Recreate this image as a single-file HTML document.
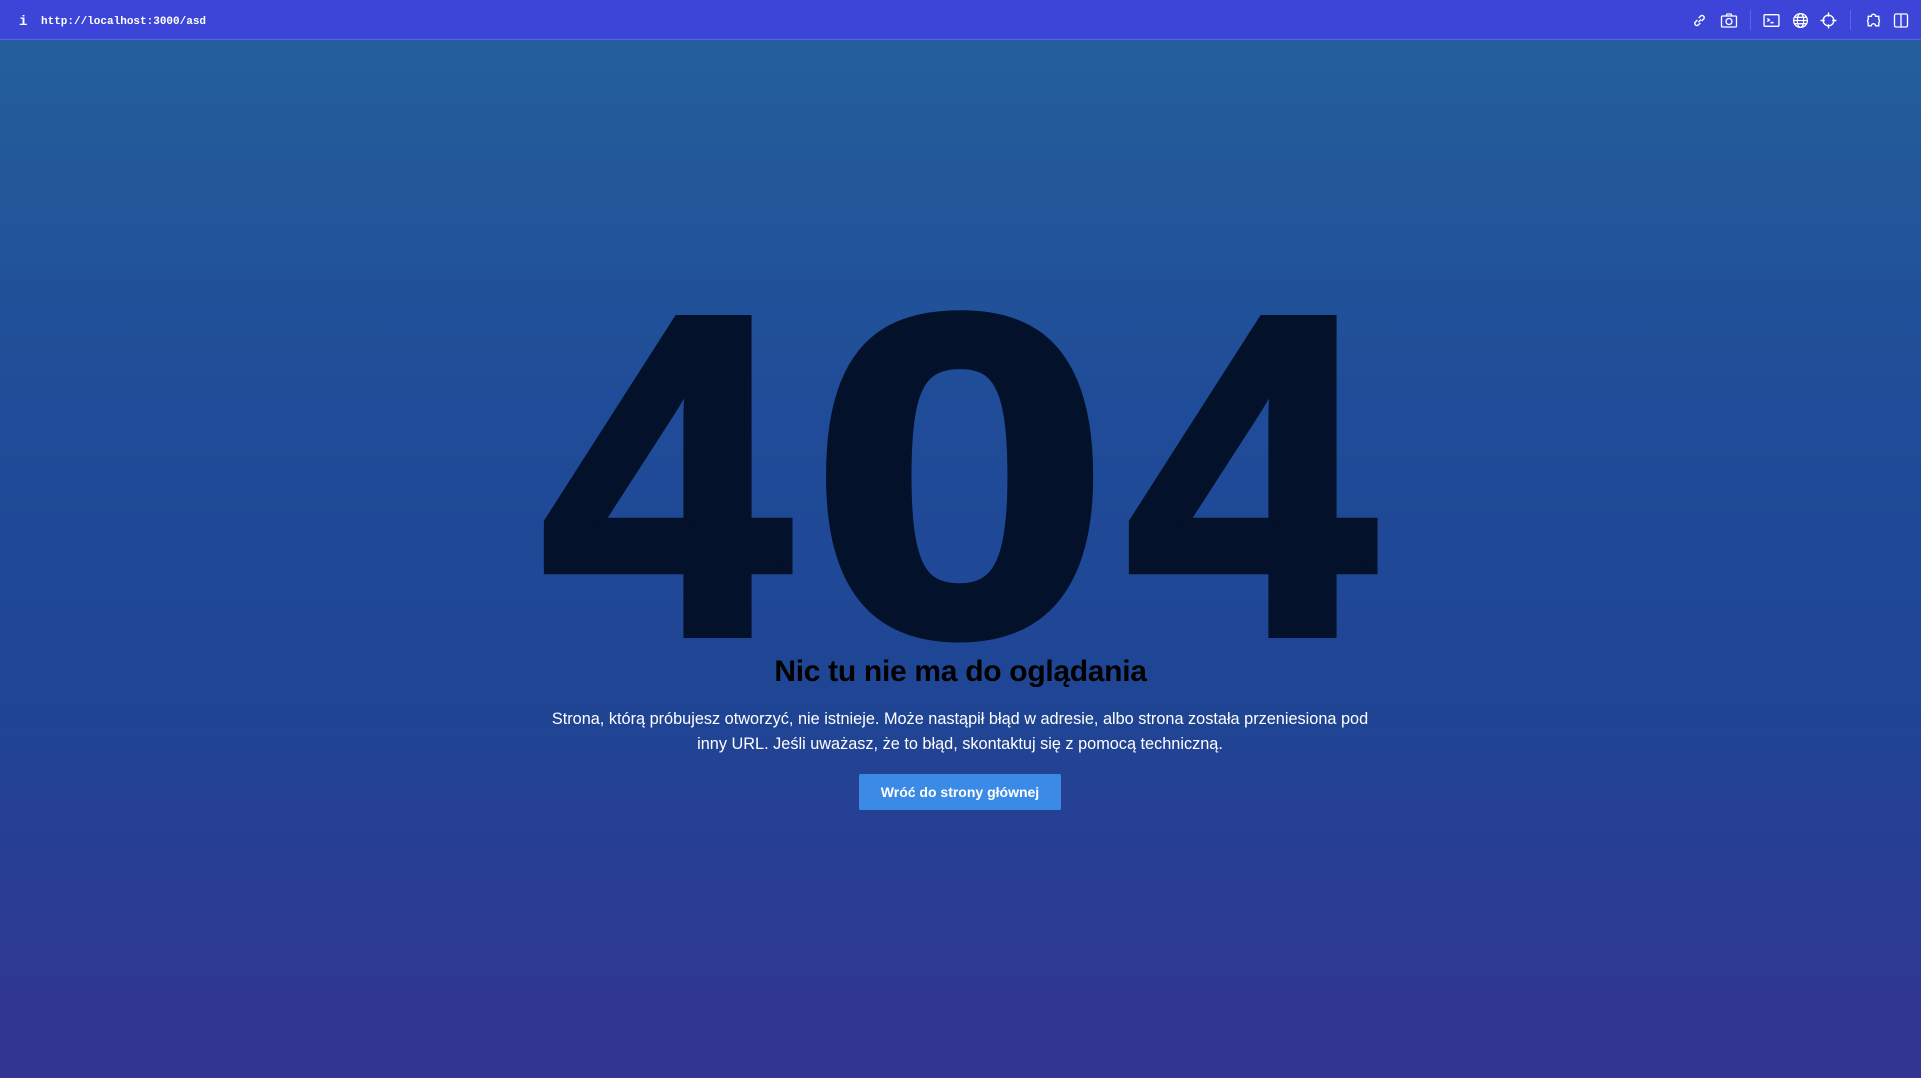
<!DOCTYPE html>
<html><head><meta charset="utf-8"><style>
html,body{margin:0;padding:0;width:1921px;height:1078px;overflow:hidden}
body{background:linear-gradient(180deg,#245f9b 40px,#1f4c98 400px,#1f4594 700px,#343592 1078px);font-family:"Liberation Sans",sans-serif;position:relative}
.bar{position:absolute;left:0;top:0;width:1921px;height:39px;background:#3c45d8;border-bottom:1px solid #5a63e6}
.bar .i{position:absolute;left:19px;top:14px;color:#fff;font:bold 14px "Liberation Mono",monospace}
.bar .url{position:absolute;left:41px;top:16px;color:#fff;font:bold 11px "Liberation Mono",monospace}
.ic{position:absolute;top:12px}
.div{position:absolute;top:10px;width:1px;height:20px;background:#5a63e6}
.d{position:absolute;top:249px;width:400px;text-align:center;font-size:455px;line-height:1;font-weight:bold;color:#03112a;-webkit-text-stroke:10px #03112a}
h1{position:absolute;left:0;width:1921px;top:655px;margin:0;text-align:center;font-size:30px;font-weight:bold;color:#000;letter-spacing:-0.3px}
p{position:absolute;left:540px;width:840px;top:707px;margin:0;text-align:center;color:#fff;font-size:16.3px;line-height:25px}
.btn{position:absolute;left:859px;top:774px;width:202px;height:36px;background:#3a8ae6;border-radius:2px;color:#fff;font-weight:bold;font-size:14px;line-height:36px;text-align:center}
</style></head><body>
<div class="bar">
<span class="i">i</span><span class="url">http://localhost:3000/asd</span>
<svg class="ic" style="left:1691px" width="17" height="17" viewBox="0 0 16 16" fill="none" stroke="#fff" stroke-width="1.3"><path d="M7 9.5l2.5-2.5M6 7.5L4 9.5a2 2 0 0 0 2.8 2.8l2-2M10 8.5l2-2A2 2 0 0 0 9.2 3.7l-2 2"/></svg>
<svg class="ic" style="left:1720px" width="18" height="17" viewBox="0 0 18 16" fill="none" stroke="#fff" stroke-width="1.3"><rect x="1.5" y="3.5" width="15" height="11" rx="1"/><path d="M6 3.5l1-2h4l1 2"/><circle cx="9" cy="9" r="3"/></svg>
<div class="div" style="left:1750px"></div>
<svg class="ic" style="left:1763px" width="17" height="17" viewBox="0 0 16 16" fill="none" stroke="#fff" stroke-width="1.3"><rect x="1" y="2.5" width="14" height="11" rx="1"/><path d="M4 6l2 1.5L4 9M7 10h3"/></svg>
<svg class="ic" style="left:1792px" width="17" height="17" viewBox="0 0 16 16" fill="none" stroke="#fff" stroke-width="1.2"><circle cx="8" cy="8" r="6.5"/><ellipse cx="8" cy="8" rx="3" ry="6.5"/><path d="M1.5 8h13M2.5 5h11M2.5 11h11"/></svg>
<svg class="ic" style="left:1820px" width="17" height="17" viewBox="0 0 16 16" fill="none" stroke="#fff" stroke-width="1.3"><circle cx="8" cy="8" r="5"/><path d="M8 0.5v4M8 11.5v4M0.5 8h4M11.5 8h4"/></svg>
<div class="div" style="left:1850px"></div>
<svg class="ic" style="left:1864px" width="19" height="17" viewBox="0 0 18 16" fill="none" stroke="#fff" stroke-width="1.3"><path d="M4 4h3a2 2 0 0 1 4 0h3v3a2 2 0 0 1 0 3v3h-3a2 2 0 0 0-4 0H4v-3a2 2 0 0 1 0-3z"/></svg>
<svg class="ic" style="left:1893px" width="16" height="17" viewBox="0 0 16 16" fill="none" stroke="#fff" stroke-width="1.3"><rect x="1.5" y="1.5" width="13" height="13" rx="1.5"/><path d="M8 1.5v13"/></svg>
</div>
<div class="d" style="left:466px;transform:scaleX(0.98)">4</div>
<div class="d" style="left:760px;transform:scaleX(1.18)">0</div>
<div class="d" style="left:1051px;transform:scaleX(0.98)">4</div>
<h1>Nic tu nie ma do oglądania</h1>
<p>Strona, którą próbujesz otworzyć, nie istnieje. Może nastąpił błąd w adresie, albo strona została przeniesiona pod inny URL. Jeśli uważasz, że to błąd, skontaktuj się z pomocą techniczną.</p>
<div class="btn">Wróć do strony głównej</div>
</body></html>
